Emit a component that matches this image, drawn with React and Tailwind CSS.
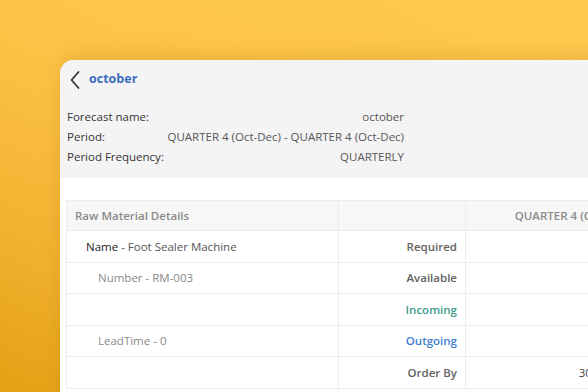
import React from "react";

const rows = [
  { left: <span className="text-[#555]"><span className="text-[#222]">Name</span> - Foot Sealer Machine</span>, indent: "pl-[19px]", label: "Required", labelColor: "text-[#626262]", value: "" },
  { left: <span className="text-[#8a8a8a]">Number - RM-003</span>, indent: "pl-[31px]", label: "Available", labelColor: "text-[#626262]", value: "" },
  { left: null, indent: "", label: "Incoming", labelColor: "text-[#3f9c8e]", value: "" },
  { left: <span className="text-[#8a8a8a]">LeadTime - 0</span>, indent: "pl-[31px]", label: "Outgoing", labelColor: "text-[#3f7fd2]", value: "" },
  { left: null, indent: "", label: "Order By", labelColor: "text-[#626262]", value: "30/09/2024 10:00" },
];

function BackChevron() {
  return (
    <svg width="10" height="18" viewBox="0 0 10 18" fill="none">
      <polyline points="8.5,1 1.5,9 8.5,17" stroke="#333" strokeWidth="1.8" strokeLinecap="round" strokeLinejoin="round" />
    </svg>
  );
}

export default function App() {
  return (
    <div className="w-[588px] h-[392px] overflow-hidden bg-[linear-gradient(205deg,#ffca50_0%,#fdc346_45%,#f2b230_75%,#e3a014_100%)] pl-[60px] pt-[60px] font-['Open_Sans',sans-serif]">
      {/* Card */}
      <div className="w-[620px] h-[360px] bg-white rounded-tl-[14px] shadow-[0_-6px_18px_rgba(160,100,0,0.18)] overflow-hidden">
        {/* Header area */}
        <div className="bg-[#f4f4f5]">
          <div className="h-[39px] flex items-center pl-[10px] gap-[9px]">
            <BackChevron />
            <span className="text-[12.5px] font-bold text-[#3a6cc2]">october</span>
          </div>
          <div className="pl-[7px] pt-[8px] pb-[11px] text-[11.5px] leading-[20px]">
            <div className="grid grid-cols-[100px_237px]">
              <span className="text-[#333]">Forecast name:</span>
              <span className="text-right text-[#555]">october</span>
              <span className="text-[#333]">Period:</span>
              <span className="text-right text-[#555] whitespace-nowrap">QUARTER 4 (Oct-Dec) - QUARTER 4 (Oct-Dec)</span>
              <span className="text-[#333]">Period Frequency:</span>
              <span className="text-right text-[#555]">QUARTERLY</span>
            </div>
          </div>
        </div>

        {/* Table */}
        <div className="pt-[22px] pl-[6px]">
          <div className="w-[613px] border-t border-l border-[#ececec] text-[11.5px]">
            <div className="grid grid-cols-[272px_127px_214px] h-[30px] bg-[#f7f7f7] border-b border-[#ececec]">
              <div className="flex items-center pl-[8px] pt-[1px] font-semibold text-[#8a8a8a] border-r border-[#ececec]">Raw Material Details</div>
              <div className="border-r border-[#ececec]" />
              <div className="flex items-center justify-center pt-[1px] font-semibold text-[#8a8a8a] whitespace-nowrap">QUARTER 4 (Oct-Dec)</div>
            </div>
            {rows.map((r, i) => (
              <div key={i} className="grid grid-cols-[272px_127px_214px] h-[31.5px] border-b border-[#ececec]">
                <div className={`flex items-center ${r.indent} border-r border-[#ececec]`}>{r.left}</div>
                <div className={`flex items-center justify-end pr-[8px] font-semibold ${r.labelColor} border-r border-[#ececec]`}>{r.label}</div>
                <div className="flex items-center justify-end pr-[8px] text-[#444] whitespace-nowrap">{r.value}</div>
              </div>
            ))}
          </div>
        </div>
      </div>
    </div>
  );
}
